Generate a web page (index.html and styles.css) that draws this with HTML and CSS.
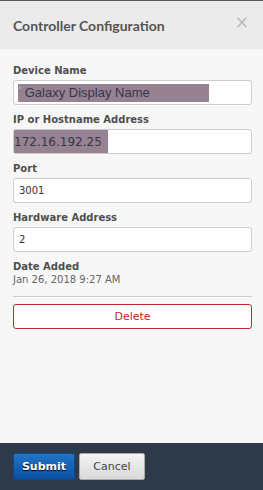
FILE: index.html
```html
<!DOCTYPE html>
<html lang="en">
<head>
    <meta charset="UTF-8">
    <meta name="viewport" content="width=device-width, initial-scale=1.0">
    <title>Controller Configuration</title>
    <link rel="stylesheet" href="styles.css">
</head>
<body>
    <div class="modal">
        <div class="modal-header">
            <h2 class="modal-title">Controller Configuration</h2>
            <span class="close">&times;</span>
        </div>

        <div class="modal-body">
            <div class="field">
                <label class="label">Device Name</label>
                <div class="input"><span class="sel sel-name"><span class="tick">'</span>Galaxy Display Name</span></div>
            </div>
            <div class="field">
                <label class="label">IP or Hostname Address</label>
                <div class="input input-flush"><span class="sel sel-ip">172.16.192.25</span></div>
            </div>
            <div class="field">
                <label class="label">Port</label>
                <div class="input"><span class="value">3001</span></div>
            </div>
            <div class="field">
                <label class="label">Hardware Address</label>
                <div class="input"><span class="value">2</span></div>
            </div>
            <div class="info">
                <p class="label">Date Added</p>
                <p class="date">Jan 26, 2018 9:27 AM</p>
            </div>
            <hr class="divider">
            <button class="btn-delete">Delete</button>
        </div>

        <div class="modal-footer">
            <button class="btn btn-submit">Submit</button>
            <button class="btn btn-cancel">Cancel</button>
        </div>
    </div>
</body>
</html>
```

FILE: styles.css
```css
* { box-sizing: border-box; }
body { margin: 0; font-family: "DejaVu Sans", sans-serif; color: #555; }
.modal { width: 263px; height: 490px; display: flex; flex-direction: column; border-top: 1px solid #5a5a5a; }
.modal-header { height: 48px; background: #ebebeb; display: flex; align-items: center; justify-content: space-between; padding: 0 14px 0 13px; }
.modal-title { margin: 0; font-family: Lato, sans-serif; font-size: 14px; font-weight: bold; color: #555; }
.close { font-size: 17px; color: #bbb; line-height: 1; margin-top: -6px; }
.modal-body { flex: 1; background: #f7f7f7; padding: 15px 11px 0 13px; }
.field { margin-bottom: 8px; }
.label { display: block; margin: 0 0 2px; font-size: 10px; font-weight: bold; line-height: 14px; color: #4f4f4f; }
.input { height: 25px; background: #fff; border: 1px solid #ccc; border-radius: 3px; display: flex; align-items: center; padding: 0 4px; }
.input-flush { padding: 0; }
.sel { background: #968290; color: #36364a; font-family: "Liberation Sans", sans-serif; font-size: 13px; display: flex; align-items: center; }
.sel-name { width: 191px; height: 18px; padding-left: 1px; }
.tick { color: #e4dde2; font-size: 9px; align-self: flex-start; margin: 1px 4px 0 0; }
.sel-ip { height: 23px; padding-right: 6px; font-family: "DejaVu Sans", sans-serif; font-size: 12px; }
.value { font-size: 10px; color: #333; padding-left: 1px; }
.info .label { line-height: 13px; margin: 0; }
.date { margin: 0; font-size: 10px; line-height: 13px; color: #666; }
.divider { border: 0; border-top: 1px solid #ccc; margin: 10px 0 7px; }
.btn-delete { width: 100%; height: 25px; background: #fff; border: 1px solid #c1272d; border-radius: 3px; color: #c1272d; font-family: "DejaVu Sans", sans-serif; font-size: 11px; }
.modal-footer { height: 47px; background: #2e3a4a; display: flex; gap: 4px; padding: 10px 13px 0; }
.btn { height: 27px; border-radius: 2px; font-family: "DejaVu Sans", sans-serif; font-size: 11px; }
.btn-submit { width: 62px; background: linear-gradient(#2174c6, #0a50a2); border: 1px solid #0b4a8e; color: #fff; font-weight: bold; text-shadow: 0 1px 1px #000; }
.btn-cancel { width: 66px; background: linear-gradient(#f4f4f4, #d9d9d9); border: 1px solid #aaa; color: #444; }
```
